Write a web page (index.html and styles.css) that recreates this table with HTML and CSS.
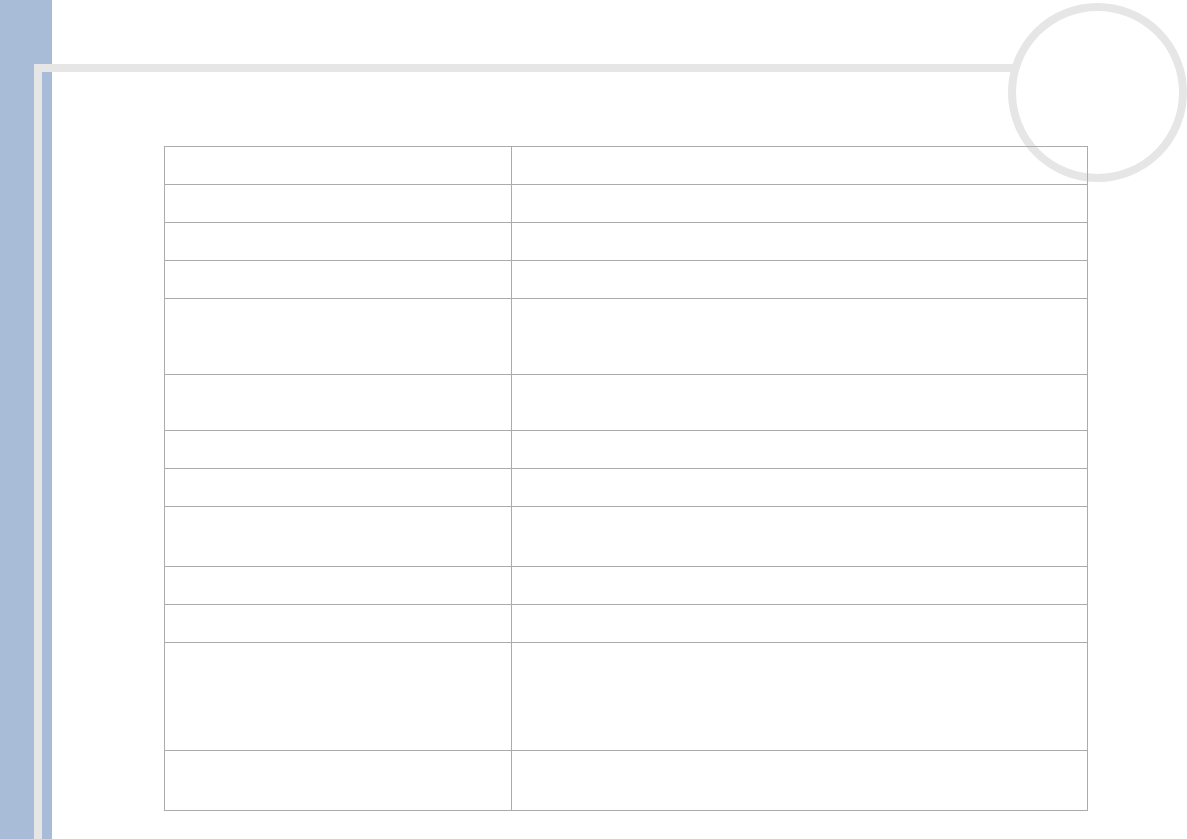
FILE: index.html
```html
<!DOCTYPE html>
<html>
<head>
<meta charset="utf-8">
<link rel="stylesheet" href="styles.css">
</head>
<body>
<div class="page">
  <aside class="sidebar"></aside>
  <main class="main">
    <div class="frame">
      <div class="grid">
        <div class="cell c1 h38"></div><div class="cell c2 h38"></div>
        <div class="cell c1 h38"></div><div class="cell c2 h38"></div>
        <div class="cell c1 h38"></div><div class="cell c2 h38"></div>
        <div class="cell c1 h38"></div><div class="cell c2 h38"></div>
        <div class="cell c1 h76"></div><div class="cell c2 h76"></div>
        <div class="cell c1 h56"></div><div class="cell c2 h56"></div>
        <div class="cell c1 h38"></div><div class="cell c2 h38"></div>
        <div class="cell c1 h38"></div><div class="cell c2 h38"></div>
        <div class="cell c1 h60"></div><div class="cell c2 h60"></div>
        <div class="cell c1 h38"></div><div class="cell c2 h38"></div>
        <div class="cell c1 h38"></div><div class="cell c2 h38"></div>
        <div class="cell c1 h108"></div><div class="cell c2 h108"></div>
        <div class="cell c1 h60"></div><div class="cell c2 h60"></div>
      </div>
    </div>
    <div class="ring"></div>
  </main>
</div>
</body>
</html>
```
FILE: styles.css
```css
html, body {
  margin: 0;
  padding: 0;
  background: #ffffff;
  font-family: "Liberation Sans", Arial, sans-serif;
  overflow: hidden;
}
.page {
  display: flex;
  width: 1187px;
  height: 839px;
}
.sidebar {
  width: 52px;
  flex: 0 0 52px;
  background: #a8bcd8;
}
.main {
  flex: 1;
  position: relative;
}
.frame {
  margin-left: -18px;
  margin-top: 64px;
  width: 1016px;
  height: 775px;
  box-sizing: border-box;
  border-top: 8px solid #e6e6e6;
  border-left: 8px solid #e6e6e6;
  padding: 74px 0 0 122px;
}
.grid {
  position: relative;
  z-index: 2;
  display: grid;
  grid-template-columns: 347px 576px;
  width: 924px;
  box-sizing: border-box;
  border-top: 1px solid #ababab;
  border-left: 1px solid #ababab;
}
.cell {
  box-sizing: border-box;
  border-right: 1px solid #ababab;
  border-bottom: 1px solid #ababab;
}
.h38 { height: 38px; }
.h56 { height: 56px; }
.h60 { height: 60px; }
.h76 { height: 76px; }
.h108 { height: 108px; }
.ring {
  position: absolute;
  z-index: 1;
  left: 956px;
  top: 3px;
  width: 179px;
  height: 179px;
  box-sizing: border-box;
  border-radius: 50%;
  border: 8px solid #e6e6e6;
  background: #ffffff;
}
```
